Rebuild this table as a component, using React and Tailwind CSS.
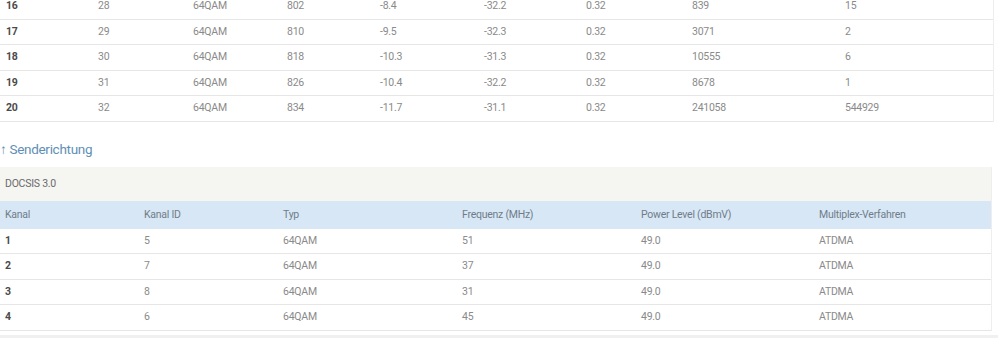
import React from 'react'

const down = [
  ['16', '28', '64QAM', '802', '-8.4', '-32.2', '0.32', '839', '15'],
  ['17', '29', '64QAM', '810', '-9.5', '-32.3', '0.32', '3071', '2'],
  ['18', '30', '64QAM', '818', '-10.3', '-31.3', '0.32', '10555', '6'],
  ['19', '31', '64QAM', '826', '-10.4', '-32.2', '0.32', '8678', '1'],
  ['20', '32', '64QAM', '834', '-11.7', '-31.1', '0.32', '241058', '544929'],
]
const downCols = ['w-[92px]', 'w-[95px]', 'w-[94px]', 'w-[93px]', 'w-[104px]', 'w-[102px]', 'w-[106px]', 'w-[153px]', 'flex-1']

const upHead = ['Kanal', 'Kanal ID', 'Typ', 'Frequenz (MHz)', 'Power Level (dBmV)', 'Multiplex-Verfahren']
const up = [
  ['1', '5', '64QAM', '51', '49.0', 'ATDMA'],
  ['2', '7', '64QAM', '37', '49.0', 'ATDMA'],
  ['3', '8', '64QAM', '31', '49.0', 'ATDMA'],
  ['4', '6', '64QAM', '45', '49.0', 'ATDMA'],
]
const upCols = ['w-[139px]', 'w-[139px]', 'w-[179px]', 'w-[179px]', 'w-[178px]', 'flex-1']

export default function App() {
  return (
    <div className="w-[998px] h-[338px] overflow-hidden bg-white text-[10.5px] tracking-[-0.25px] text-[#8a8a8a] font-['Roboto',sans-serif]">
      {/* downstream tail */}
      <div className="mt-[-6px] w-[994px] border-r border-[#eee]">
        {down.map((r) => (
          <div key={r[0]} className="flex h-[25.5px] items-center border-b border-[#e6e6e6] pl-[6px]">
            {r.map((c, i) => (
              <div key={i} className={`${downCols[i]} ${i === 0 ? 'font-bold text-[#4a4a4a]' : ''}`}>{c}</div>
            ))}
          </div>
        ))}
      </div>

      <div className="mt-[16px] flex h-[24px] items-center text-[13.5px] tracking-[-0.3px] text-[#5f8fb5]">
        <span className="mr-[3px]">↑</span>Senderichtung
      </div>

      <div className="mt-[5px] w-[992px] border-r border-[#eee]">
        <div className="flex h-[34px] items-center bg-[#f5f5f2] pl-[5px] text-[#6a6a6a]">DOCSIS 3.0</div>
        <div className="flex h-[28px] items-center bg-[#d8e7f5] pl-[5px] text-[#6f7d8a]">
          {upHead.map((h, i) => (
            <div key={h} className={upCols[i]}>{h}</div>
          ))}
        </div>
        {up.map((r) => (
          <div key={r[0]} className="flex h-[25.5px] items-center border-b border-[#e6e6e6] pl-[5px]">
            {r.map((c, i) => (
              <div key={i} className={`${upCols[i]} ${i === 0 ? 'font-bold text-[#4a4a4a]' : ''}`}>{c}</div>
            ))}
          </div>
        ))}
      </div>
      <div className="mt-[4px] h-[6px] bg-[#f0f0f0]" />
    </div>
  )
}
